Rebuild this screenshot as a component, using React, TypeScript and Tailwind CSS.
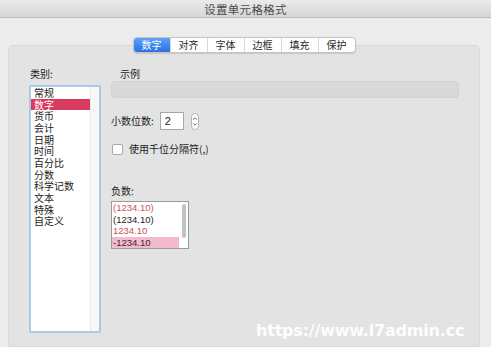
import React from "react";

const CJK = '"Noto Sans CJK SC", "Noto Sans", sans-serif';

const categories = ["常规", "数字", "货币", "会计", "日期", "时间", "百分比", "分数", "科学记数", "文本", "特殊", "自定义"];
const tabs = ["数字", "对齐", "字体", "边框", "填充", "保护"];

export default function App() {
  return (
    <div
      className="relative w-[491px] h-[347px] overflow-hidden bg-[#ececec] flex flex-col text-[#222]"
      style={{ fontFamily: CJK }}
    >
      {/* title bar */}
      <div className="h-[18px] shrink-0 bg-gradient-to-b from-[#ebebeb] to-[#d6d6d6] border-b border-[#bdbdbd] flex items-center justify-center">
        <span className="text-[11.5px] leading-[14px] text-[#4a4a4a] tracking-[0.3px]">设置单元格格式</span>
      </div>

      {/* body */}
      <div className="flex-1 flex flex-col pt-[19px] pl-[8px] pr-[11px]">
        {/* tabs */}
        <div className="relative z-10 flex justify-center">
          <div className="flex h-[16px] rounded-[4px] border border-[#c4c4c4] bg-white shadow-[0_1px_1px_rgba(0,0,0,0.12)] overflow-hidden">
            {tabs.map((t, i) => (
              <div
                key={t}
                className={
                  i === 0
                    ? "w-[36px] flex items-center justify-center text-[10px] leading-[14px] text-white bg-gradient-to-b from-[#5fa2f9] to-[#2b6fe4]"
                    : "w-[37px] flex items-center justify-center text-[10px] leading-[14px] text-[#2a2a2a] border-l border-[#d8d8d8]"
                }
              >
                {t}
              </div>
            ))}
          </div>
        </div>

        {/* panel */}
        <div className="-mt-[8px] flex-1 rounded-t-[5px] bg-[#e3e3e3] border border-[#d9d9d9] flex pt-[21px] pl-[20px]">
          {/* left column */}
          <div className="w-[72px] flex flex-col">
            <div className="text-[10px] leading-[14px] pl-[1px]">类别:</div>
            <div className="mt-[4px] h-[248px] border-[2px] border-[#a9cbea] bg-white flex rounded-[2px]">
              <div className="flex-1 flex flex-col">
                {categories.map((c, i) => (
                  <div
                    key={c}
                    className={
                      i === 1
                        ? "h-[11.66px] pl-[3px] text-[10px] leading-[11.66px] text-white bg-[#d93a60]"
                        : "h-[11.66px] pl-[3px] text-[10px] leading-[11.66px] text-[#222]"
                    }
                  >
                    {c}
                  </div>
                ))}
              </div>
              <div className="w-[9px] bg-[#f7f7f7] border-l border-[#ebebeb]" />
            </div>
          </div>

          {/* right column */}
          <div className="ml-[10px] flex flex-col">
            <div className="text-[10px] leading-[14px] pl-[9px]">示例</div>
            <div className="w-[348px] h-[17px] rounded-[4px] bg-[#d9d9d9] border border-[#d2d2d2]" />

            <div className="mt-[14px] flex items-center h-[18px]">
              <span className="text-[10px] leading-[14px]">小数位数:</span>
              <div
                className="ml-[6px] w-[24px] h-[18px] bg-white border border-[#a8a8a8] flex items-center pl-[4px] text-[11px] leading-[14px]"
                style={{ fontFamily: '"Liberation Sans", sans-serif' }}
              >
                2
              </div>
              <div className="ml-[7px] w-[8px] h-[17px] rounded-full bg-white border border-[#b5b5b5] flex items-center justify-center">
                <svg width="6" height="13" viewBox="0 0 6 13">
                  <path d="M1.2 4.6 L3 2.8 L4.8 4.6" fill="none" stroke="#555" strokeWidth="0.9" />
                  <path d="M1.2 8.4 L3 10.2 L4.8 8.4" fill="none" stroke="#555" strokeWidth="0.9" />
                </svg>
              </div>
            </div>

            <div className="mt-[13px] flex items-center h-[12px] pl-[1px]">
              <div className="w-[11px] h-[11px] rounded-[2px] bg-white border border-[#a9a9a9]" />
              <span className="ml-[6px] text-[10px] leading-[12px]">使用千位分隔符(,)</span>
            </div>

            <div className="mt-[29px] text-[10px] leading-[14px]">负数:</div>
            <div
              className="mt-[3px] w-[78px] h-[48px] border border-[#9a9a9a] bg-white flex"
              style={{ fontFamily: '"Liberation Sans", sans-serif' }}
            >
              <div className="flex-1 flex flex-col">
                <div className="h-[11.5px] pl-[1px] text-[9.5px] leading-[11.5px] text-[#c9545c]">(1234.10)</div>
                <div className="h-[11.5px] pl-[1px] text-[9.5px] leading-[11.5px] text-[#222]">(1234.10)</div>
                <div className="h-[11.5px] pl-[1px] text-[9.5px] leading-[11.5px] text-[#cc4e57]">1234.10</div>
                <div className="h-[11.5px] pl-[1px] text-[9.5px] leading-[11.5px] text-[#3a2a2e] bg-[#f3b9cd]">-1234.10</div>
              </div>
              <div className="w-[9px] flex justify-center pt-[2px]">
                <div className="w-[4px] h-[34px] rounded-full bg-[#c2c2c2]" />
              </div>
            </div>
          </div>
        </div>
      </div>

      {/* watermark */}
      <div
        className="absolute left-[256px] top-[321px] text-[16px] leading-[20px] font-bold text-white/95 tracking-[-0.2px] whitespace-nowrap"
        style={{ fontFamily: '"DejaVu Sans", sans-serif' }}
      >
        https://www.l7admin.cc
      </div>
    </div>
  );
}
